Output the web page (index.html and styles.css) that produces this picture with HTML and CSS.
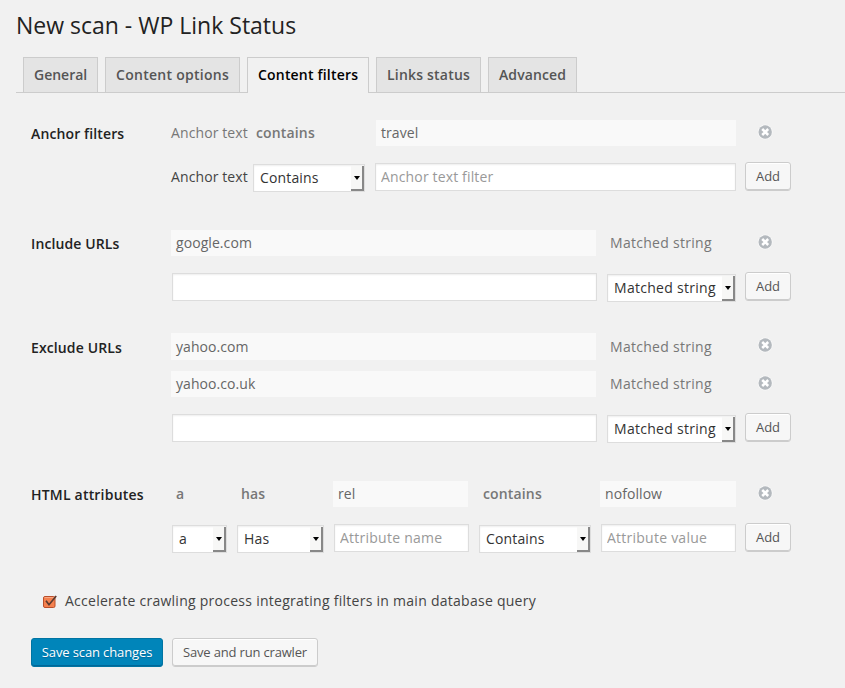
FILE: index.html
```html
<!DOCTYPE html>
<html lang="en">
<head>
<meta charset="utf-8">
<title>New scan - WP Link Status</title>
<link rel="stylesheet" href="styles.css">
</head>
<body>
<svg class="sprites" width="0" height="0" aria-hidden="true">
  <symbol id="remove" viewBox="0 0 16 16">
    <circle cx="8.2" cy="8" r="7.5" fill="#fff" fill-opacity=".6"/>
    <circle cx="8.2" cy="8" r="6.7" fill="#b4b9be"/>
    <path d="M5.2 5l6 6M11.2 5l-6 6" stroke="#fff" stroke-width="2.5"/>
  </symbol>
</svg>
<main class="wrap">
  <h2 class="title">New scan - WP Link Status</h2>
  <nav class="tabs">
    <a class="tab general">General</a>
    <a class="tab options">Content options</a>
    <a class="tab filters active">Content filters</a>
    <a class="tab links">Links status</a>
    <a class="tab advanced">Advanced</a>
  </nav>

  <form class="form">
    <section class="group anchor">
      <h3 class="label">Anchor filters</h3>
      <div class="rows">
        <div class="row saved">
          <span class="text anchor-word">Anchor text</span>
          <b class="text anchor-op">contains</b>
          <span class="value">travel</span>
          <svg class="remove"><use href="#remove"/></svg>
        </div>
        <div class="row entry">
          <span class="text caption anchor-word">Anchor text</span>
          <div class="select anchor-select">Contains<i class="arrow"></i></div>
          <input class="input" type="text" placeholder="Anchor text filter">
          <button class="button" type="button">Add</button>
        </div>
      </div>
    </section>

    <section class="group urls include">
      <h3 class="label">Include URLs</h3>
      <div class="rows">
        <div class="row saved">
          <span class="value">google.com</span>
          <span class="text">Matched string</span>
          <svg class="remove"><use href="#remove"/></svg>
        </div>
        <div class="row entry">
          <input class="input" type="text">
          <div class="select">Matched string<i class="arrow"></i></div>
          <button class="button" type="button">Add</button>
        </div>
      </div>
    </section>

    <section class="group urls exclude">
      <h3 class="label">Exclude URLs</h3>
      <div class="rows">
        <div class="row saved tall">
          <span class="value">yahoo.com</span>
          <span class="text">Matched string</span>
          <svg class="remove"><use href="#remove"/></svg>
        </div>
        <div class="row saved">
          <span class="value">yahoo.co.uk</span>
          <span class="text">Matched string</span>
          <svg class="remove"><use href="#remove"/></svg>
        </div>
        <div class="row entry">
          <input class="input" type="text">
          <div class="select">Matched string<i class="arrow"></i></div>
          <button class="button" type="button">Add</button>
        </div>
      </div>
    </section>

    <section class="group attributes">
      <h3 class="label">HTML attributes</h3>
      <div class="rows">
        <div class="row saved">
          <b class="text">a</b>
          <b class="text">has</b>
          <span class="value">rel</span>
          <b class="text">contains</b>
          <span class="value">nofollow</span>
          <svg class="remove"><use href="#remove"/></svg>
        </div>
        <div class="row entry">
          <div class="select">a<i class="arrow"></i></div>
          <div class="select">Has<i class="arrow"></i></div>
          <input class="input" type="text" placeholder="Attribute name">
          <div class="select">Contains<i class="arrow"></i></div>
          <input class="input" type="text" placeholder="Attribute value">
          <button class="button" type="button">Add</button>
        </div>
      </div>
    </section>

    <div class="accelerate">
      <svg class="check" viewBox="0 0 15 14">
        <rect x="0.5" y="2.5" width="11.5" height="11" rx="1.5" fill="#f5814f" stroke="#b94e2b"/>
        <path d="M1.5 3.5h9" stroke="#f9a783"/>
        <path d="M3 6.7l3 4L13.2 2" fill="none" stroke="#5a3a30" stroke-width="1.7"/>
      </svg>
      <span>Accelerate crawling process integrating filters in main database query</span>
    </div>

    <div class="actions">
      <button class="button primary" type="button">Save scan changes</button>
      <button class="button run" type="button">Save and run crawler</button>
    </div>
  </form>
</main>
</body>
</html>
```
FILE: styles.css
```css
* { box-sizing: border-box; }

body {
  margin: 0;
  background: #f1f1f1;
  color: #444;
  font-family: "Open Sans", sans-serif;
  font-size: 14px;
  line-height: 20px;
}

.sprites { display: block; }

.wrap { padding-left: 16px; height: 688px; overflow: hidden; }

.title {
  margin: 0;
  padding-top: 11px;
  height: 57px;
  color: #222;
  font-size: 23px;
  font-weight: 400;
  line-height: 29px;
}

.tabs {
  display: flex;
  gap: 7px;
  height: 36px;
  padding-left: 7px;
  border-bottom: 1px solid #ccc;
}

.tab {
  height: 35px;
  padding-left: 10px;
  border: 1px solid #ccc;
  border-bottom: 0;
  background: #e4e4e4;
  color: #555;
  font-weight: 600;
  line-height: 34px;
  white-space: nowrap;
}

.tab.active { height: 36px; background: #f1f1f1; color: #000; }
.general { width: 75px; }
.options { width: 135px; letter-spacing: .28px; }
.filters { width: 122px; letter-spacing: .19px; }
.links { width: 105px; letter-spacing: .2px; }
.advanced { width: 89px; letter-spacing: .1px; }

.form { padding: 27px 0 0 15px; }

.group { display: flex; }
.anchor { height: 110px; }
.include { height: 103px; }
.exclude { height: 148px; }
.attributes { height: 113px; }

.label {
  width: 140px;
  margin: 4px 0 0;
  color: #222;
  font-size: 14px;
  font-weight: 600;
  letter-spacing: .12px;
}

.exclude .label { margin-top: 5px; }
.attributes .label { letter-spacing: .2px; }

.row { display: grid; }

.saved { height: 26px; margin-bottom: 11px; color: #777; }
.saved.tall { height: 27px; }
.saved:nth-last-child(2) { margin-bottom: 16px; }
.saved b { font-weight: 600; letter-spacing: .15px; }

.text { line-height: 26px; white-space: nowrap; letter-spacing: .1px; }
.urls .text, .urls .select { letter-spacing: .29px; }
.tall .text, .tall .value { line-height: 28px; }
.tall .value { height: 27px; }

.value {
  padding-left: 5px;
  background: #f9f9f9;
  color: #666;
  line-height: 26px;
  letter-spacing: .07px;
}

.remove { width: 16px; height: 16px; margin: 4px 0 0 21px; }

.entry { height: 30px; }
.caption { line-height: 30px; }

.input {
  width: 100%;
  height: 28px;
  margin: 1px 0 0;
  padding: 0 5px 2px;
  border: 1px solid #ddd;
  background: #fff;
  box-shadow: inset 0 1px 2px rgba(0, 0, 0, .07);
  color: #333;
  font: inherit;
  letter-spacing: .15px;
}

.input::placeholder { color: #999; }

.select {
  display: flex;
  justify-content: space-between;
  height: 28px;
  margin-top: 2px;
  padding-left: 6px;
  border: 1px solid #ddd;
  background: #fff;
  box-shadow: inset 0 1px 2px rgba(0, 0, 0, .07);
  color: #333;
  line-height: 26px;
  letter-spacing: .15px;
  white-space: nowrap;
}

.arrow {
  flex: none;
  display: flex;
  align-items: center;
  justify-content: center;
  width: 13px;
  height: 25px;
  margin-top: 1px;
  padding-left: 1px;
  border-right: 2px solid #888;
  border-bottom: 2px solid #888;
  background: #f7f7f6;
}

.arrow::before {
  content: "";
  border: 3px solid transparent;
  border-top: 4px solid #000;
  border-bottom: 0;
}

.button {
  width: 46px;
  height: 29px;
  padding: 0 0 1px;
  border: 1px solid #ccc;
  border-radius: 3px;
  background: #f7f7f7;
  box-shadow: inset 0 1px 0 #fff, inset 0 -1px 0 #ccc;
  color: #555;
  font: 13px/26px "Open Sans", sans-serif;
  white-space: nowrap;
}

.anchor .saved { grid-template-columns: 85px 120px 360px 46px; }
.anchor .entry { grid-template-columns: 82px 112px 361px 46px; }
.anchor .entry .input { margin-left: 10px; }
.anchor .entry .button { margin-left: 19px; }

.urls .saved { grid-template-columns: 425px 126px 46px; column-gap: 14px; }
.urls .saved .remove { margin-left: 7px; }
.urls .entry { grid-template-columns: 425px 129px 46px; column-gap: 10px; padding-left: 1px; }
.urls .entry .button { margin-left: -1px; }

.attributes .saved { grid-template-columns: 65px 97px 135px 132px 136px 46px; }
.attributes .saved .text { padding-left: 5px; }
.attributes .saved .text:nth-child(4) { padding-left: 15px; }
.attributes .entry { grid-template-columns: 55px 87px 135px 112px 135px 46px; column-gap: 10px; padding-left: 1px; }
.attributes .entry .input { letter-spacing: .24px; }
.attributes .entry .button { margin-left: -1px; }

.accelerate { display: flex; height: 44px; padding-left: 12px; }
.accelerate span { line-height: 14px; letter-spacing: .265px; }
.check { width: 15px; height: 14px; margin-right: 7px; }

.actions { display: flex; gap: 9px; }
.primary {
  width: 132px;
  border-color: #0074a2;
  background: #0085ba;
  box-shadow: inset 0 -1px 0 #006799;
  color: #fff;
  letter-spacing: -.12px;
  text-shadow: 0 1px 1px #006799;
}
.run { width: 146px; letter-spacing: -.17px; }
```
